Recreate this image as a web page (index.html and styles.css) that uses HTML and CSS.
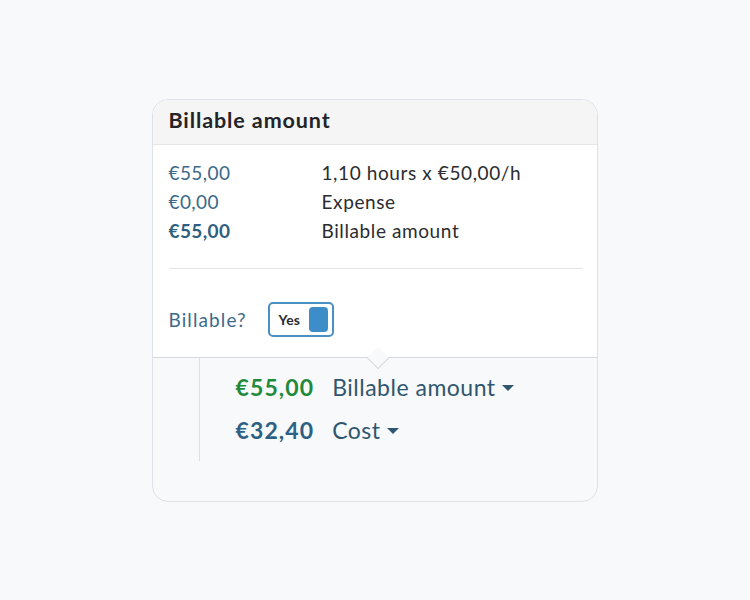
FILE: index.html
```html
<!DOCTYPE html>
<html>
<head>
<meta charset="utf-8">
<link rel="stylesheet" href="styles.css">
</head>
<body>
<div class="card">
  <div class="popover">
    <div class="pop-head">Billable amount</div>
    <div class="pop-body">
      <div class="calc">
        <div class="amt">€55,00</div><div class="desc">1,10 hours x €50,00/h</div>
        <div class="amt">€0,00</div><div class="desc">Expense</div>
        <div class="amt strong">€55,00</div><div class="desc">Billable amount</div>
      </div>
      <div class="divider"></div>
      <div class="billable">
        <span class="billable-label">Billable?</span>
        <span class="toggle"><span class="toggle-text">Yes</span><span class="knob"></span></span>
      </div>
    </div>
    <span class="arrow"></span>
  </div>
  <div class="lower">
    <div class="vline"></div>
    <div class="totals">
      <div class="tot green">€55,00</div>
      <div class="sel">Billable amount <span class="caret"></span></div>
      <div class="tot blue">€32,40</div>
      <div class="sel">Cost <span class="caret"></span></div>
    </div>
  </div>
</div>
</body>
</html>
```

FILE: styles.css
```css
html, body {
  margin: 0;
  height: 100%;
}
body {
  background: #f8f9fb;
  display: flex;
  align-items: center;
  justify-content: center;
  font-family: Lato, "Open Sans", sans-serif;
}
.card {
  width: 444px;
  height: 401px;
  border: 1px solid #dde2e8;
  border-radius: 16px;
  background: #f7f9fb;
  display: flex;
  flex-direction: column;
  margin-left: -1px;
}
.popover {
  position: relative;
  background: #fff;
  border-bottom: 1px solid #d6d9dc;
  border-radius: 16px 16px 0 0;
}
.pop-head {
  height: 45px;
  background: #f5f5f5;
  border-bottom: 1px solid #e6e6e6;
  border-radius: 16px 16px 0 0;
  padding-left: 16px;
  box-sizing: border-box;
  font-size: 21.5px;
  font-weight: 700;
  letter-spacing: 0.9px;
  color: #222427;
  line-height: 40px;
}
.pop-body {
  padding: 13px 14px 20px 16px;
}
.calc {
  display: grid;
  grid-template-columns: 153px 1fr;
  font-size: 19px;
  letter-spacing: 0.6px;
  line-height: 29px;
}
.amt { color: #3b6a8a; letter-spacing: 0.4px; }
.amt.strong { font-weight: 700; color: #2f5f80; }
.desc { color: #2a2c2f; }
.divider {
  height: 1px;
  background: #e2e4e6;
  margin: 23px 0 33px;
}
.billable {
  display: flex;
  align-items: center;
  height: 35px;
}
.billable-label {
  font-size: 19px;
  letter-spacing: 1.1px;
  color: #3b6a8a;
  width: 99px;
}
.toggle {
  display: flex;
  align-items: center;
  justify-content: space-between;
  width: 66px;
  height: 35px;
  box-sizing: border-box;
  border: 2px solid #4a90c4;
  border-radius: 5px;
  padding: 0 4px 0 9px;
}
.toggle-text {
  font-size: 14px;
  font-weight: 700;
  letter-spacing: 0.2px;
  color: #2a2c2f;
}
.knob {
  width: 19px;
  height: 25px;
  border-radius: 4px;
  background: #3d8ec8;
}
.arrow {
  position: absolute;
  left: 217px;
  bottom: -9px;
  width: 15px;
  height: 15px;
  background: #f7f9fb;
  border-right: 1px solid #d6d9dc;
  border-bottom: 1px solid #d6d9dc;
  transform: rotate(45deg);
}
.lower {
  display: flex;
  flex: 1;
}
.vline {
  width: 1px;
  background: #dcdfe3;
  margin-left: 46px;
  height: 103px;
}
.totals {
  display: grid;
  grid-template-columns: auto auto;
  justify-content: start;
  column-gap: 18px;
  row-gap: 14px;
  margin-left: 36px;
  margin-top: 15px;
  align-content: start;
  font-size: 23px;
  line-height: 29px;
}
.tot { font-weight: 700; letter-spacing: 1.1px; }
.green { color: #1f8a3b; }
.blue { color: #2c6085; }
.sel {
  color: #30566f;
  display: flex;
  align-items: center;
  gap: 6px;
  letter-spacing: 0.5px;
}
.caret {
  width: 0;
  height: 0;
  border-left: 6px solid transparent;
  border-right: 6px solid transparent;
  border-top: 6px solid #30566f;
  margin-top: 2px;
}
```
